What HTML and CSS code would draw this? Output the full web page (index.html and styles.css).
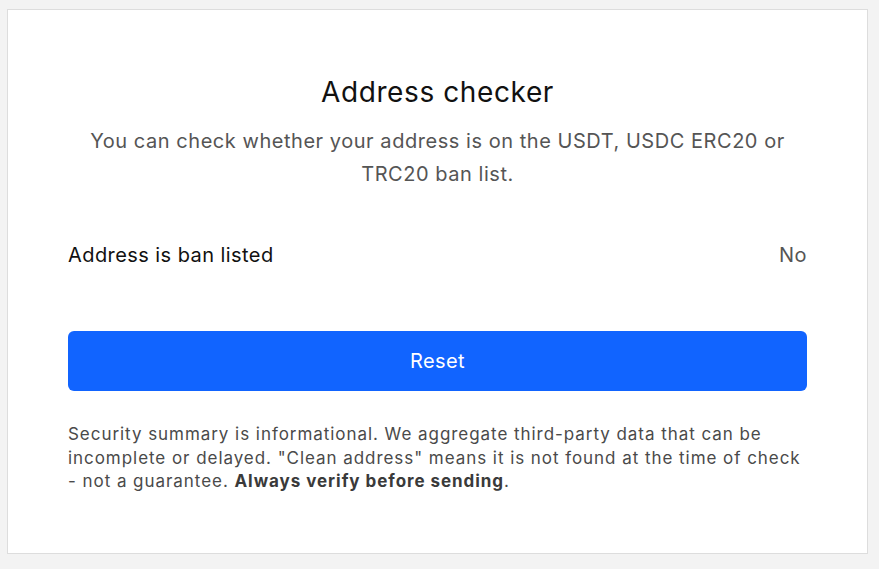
FILE: index.html
```html
<!DOCTYPE html>
<html>
<head>
<meta charset="utf-8">
<link rel="stylesheet" href="styles.css">
</head>
<body>
<div class="card">
  <h1 class="title">Address checker</h1>
  <p class="subtitle">You can check whether your address is on the USDT, USDC ERC20 or TRC20 ban list.</p>
  <div class="row">
    <span class="row-label">Address is ban listed</span>
    <span class="row-value">No</span>
  </div>
  <button class="btn">Reset</button>
  <p class="note">Security summary is informational. We aggregate third-party data that can be incomplete or delayed. "Clean address" means it is not found at the time of check - not a guarantee. <strong>Always verify before sending</strong>.</p>
</div>
</body>
</html>
```
FILE: styles.css
```css
html, body {
  margin: 0;
  padding: 0;
  background: #f3f3f3;
  font-family: Inter, "Noto Sans", sans-serif;
}
body {
  padding: 9px 11px 15px 7px;
}
.card {
  background: #fff;
  border: 1px solid #dddddd;
  padding: 64px 60px 59px;
  display: flex;
  flex-direction: column;
}
.title {
  margin: 0;
  text-align: center;
  font-size: 28px;
  line-height: 36px;
  font-weight: 400;
  letter-spacing: 0.6px;
  color: #111;
}
.subtitle {
  margin: 15px 0 0;
  padding: 0 20px;
  text-align: center;
  font-size: 20px;
  line-height: 33px;
  letter-spacing: 0.54px;
  color: #555;
}
.row {
  margin-top: 50px;
  display: flex;
  justify-content: space-between;
  align-items: center;
  font-size: 20px;
  line-height: 28px;
  letter-spacing: 0.43px;
}
.row-label { color: #111; }
.row-value { color: #555; }
.btn {
  margin-top: 62px;
  height: 60px;
  border: none;
  border-radius: 6px;
  background: #1164ff;
  color: #fff;
  font-family: inherit;
  font-size: 20px;
  letter-spacing: 0.4px;
  cursor: pointer;
}
.note {
  margin: 32px 0 0;
  font-size: 17px;
  line-height: 23.5px;
  letter-spacing: 0.95px;
  color: #4a4a4a;
}
.note strong {
  font-weight: 700;
  color: #3a3a3a;
}
```
